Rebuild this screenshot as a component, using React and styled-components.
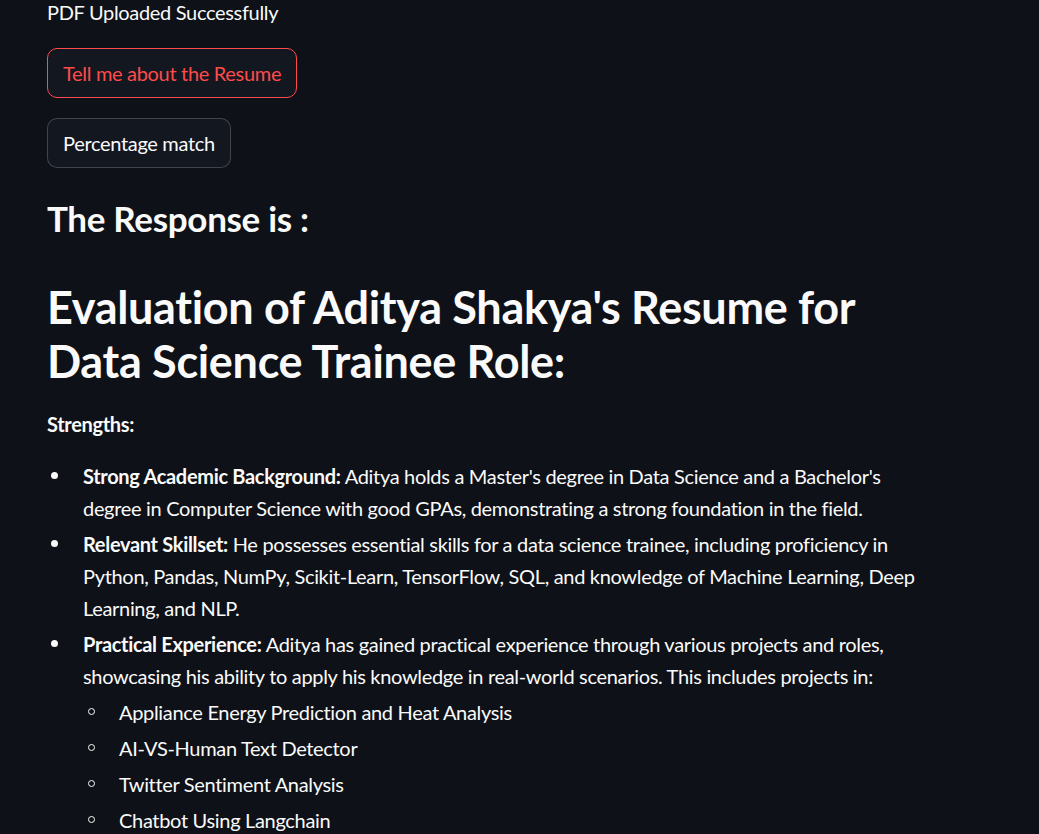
import React from "react";
import { styled, createGlobalStyle } from "styled-components";

const GlobalStyle = createGlobalStyle`
body {
  margin:0;
  background-color:#0e1117;
  color:rgb(250,250,250);
  font-family:"Lato","Noto Sans",sans-serif;
  letter-spacing:-0.02em;
  overflow:hidden;
}
`;

const Main = styled.div`
width:870px;
padding-left:47px;
display:flex;
flex-direction:column;
gap:20px;
margin-top:-4px;
`;

const Text = styled.p`
margin:0;
font-size:20px;
line-height:32px;
`;

const Button = styled.button`
align-self:flex-start;
height:50px;
padding:0 15px;
border-radius:10px;
font-family:inherit;
letter-spacing:inherit;
font-size:20px;
background-color:rgb(19,23,32);
color:${({ $active }) => $active ? 'rgb(255,75,75)' : 'rgb(250,250,250)'};
border:1px solid ${({ $active }) => $active ? 'rgb(255,75,75)' : 'rgba(250,250,250,0.2)'};
cursor:pointer;
`;

const Heading = styled.h3`
margin:0;
padding:9px 0 21px;
font-size:35px;
font-weight:700;
line-height:42px;
`;

const Markdown = styled.div`
font-size:20px;
line-height:32px;
`;

const Title = styled.h2`
margin:0;
padding:0 0 20px;
font-size:45px;
font-weight:700;
line-height:54px;
`;

const Para = styled.p`
margin:0 0 20px;
font-weight:${({ $bold }) => $bold ? 700 : 400};
`;

const List = styled.ul`
margin:0;
padding-left:36px;
list-style:none;
`;

const Item = styled.li`
position:relative;
margin:4px 0 0;
&::before {
  content:"";
  box-sizing:border-box;
  position:absolute;
  top:12px;
  left:${({ $sub }) => $sub ? '-31px' : '-32px'};
  width:7px;
  height:7px;
  border-radius:50%;
  background-color:${({ $sub }) => $sub ? 'transparent' : 'rgb(250,250,250)'};
  border:${({ $sub }) => $sub ? '1.5px solid rgb(250,250,250)' : 'none'};
}
`;

const items = [
  "Appliance Energy Prediction and Heat Analysis",
  "AI-VS-Human Text Detector",
  "Twitter Sentiment Analysis",
  "Chatbot Using Langchain",
];

export default function App() {
  return (
    <>
      <GlobalStyle />
      <Main>
        <Text>PDF Uploaded Successfully</Text>
        <Button $active>Tell me about the Resume</Button>
        <Button>Percentage match</Button>
        <Heading>The Response is :</Heading>
        <Markdown>
          <Title>Evaluation of Aditya Shakya's Resume for Data Science Trainee Role:</Title>
          <Para $bold>Strengths:</Para>
          <List>
            <Item>
              <strong>Strong Academic Background:</strong> Aditya holds a Master's degree in Data Science and a Bachelor's degree in Computer Science with good GPAs, demonstrating a strong foundation in the field.
            </Item>
            <Item>
              <strong>Relevant Skillset:</strong> He possesses essential skills for a data science trainee, including proficiency in Python, Pandas, NumPy, Scikit-Learn, TensorFlow, SQL, and knowledge of Machine Learning, Deep Learning, and NLP.
            </Item>
            <Item>
              <strong>Practical Experience:</strong> Aditya has gained practical experience through various projects and roles, showcasing his ability to apply his knowledge in real-world scenarios. This includes projects in:
              <List>
                {items.map((it) => <Item $sub key={it}>{it}</Item>)}
              </List>
            </Item>
          </List>
        </Markdown>
      </Main>
    </>
  );
}
